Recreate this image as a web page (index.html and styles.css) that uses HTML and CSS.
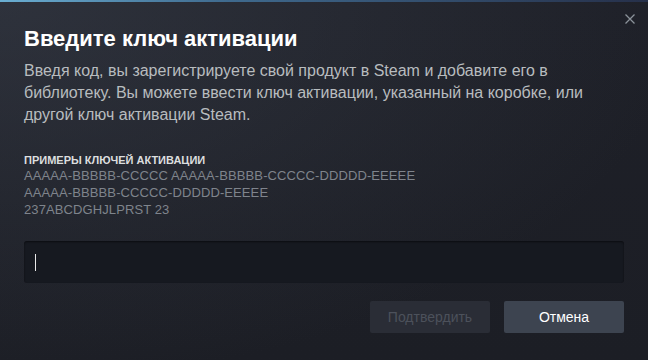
FILE: index.html
```html
<!DOCTYPE html>
<html>
<head>
  <meta charset="UTF-8">
  <title>Активация продукта</title>
  <link rel="stylesheet" href="styles.css">
</head>
<body>
  <div class="dialog">
    <button class="close-btn" aria-label="Закрыть">
      <svg width="10" height="10" viewBox="0 0 10 10">
        <path d="M0.5 0.5 L9.5 9.5 M9.5 0.5 L0.5 9.5" stroke="#8b929a" stroke-width="1.3" fill="none"/>
      </svg>
    </button>

    <h1 class="dialog-title">Введите ключ активации</h1>
    <p class="dialog-text">Введя код, вы зарегистрируете свой продукт в Steam и добавите его в библиотеку. Вы можете ввести ключ активации, указанный на коробке, или другой ключ активации Steam.</p>

    <div class="key-examples">
      <div class="key-label">Примеры ключей активации</div>
      <div class="key-line">AAAAA-BBBBB-CCCCC AAAAA-BBBBB-CCCCC-DDDDD-EEEEE</div>
      <div class="key-line">AAAAA-BBBBB-CCCCC-DDDDD-EEEEE</div>
      <div class="key-line">237ABCDGHJLPRST 23</div>
    </div>

    <div class="key-input"><span class="caret"></span></div>

    <div class="dialog-buttons">
      <button class="btn btn-disabled">Подтвердить</button>
      <button class="btn btn-cancel">Отмена</button>
    </div>
  </div>
</body>
</html>
```

FILE: styles.css
```css
:root {
  --text-main: #ffffff;
  --text-body: #b8bcbf;
  --text-keys: #7f848c;
  --input-bg: #161920;
  --btn-bg: #3d4450;
  --btn-disabled-bg: #2a2d36;
  --btn-disabled-text: #4c515b;
}

html, body {
  margin: 0;
  padding: 0;
}

body {
  font-family: "Liberation Sans", Arial, sans-serif;
  background: #1b1d23;
}

.dialog {
  position: relative;
  box-sizing: border-box;
  width: 648px;
  height: 360px;
  padding: 25px 24px 0;
  background:
    linear-gradient(to right, #6aaed2 0%, #3f6a8e 35%, #26304a 100%) top left / 100% 2px no-repeat,
    radial-gradient(ellipse at 0% 0%, rgba(62, 68, 80, 0.5) 0%, rgba(62, 68, 80, 0) 75%),
    linear-gradient(to bottom, #1e2028 0%, #1c1e25 100%);
}

.close-btn {
  position: absolute;
  top: 12px;
  right: 11px;
  width: 14px;
  height: 14px;
  padding: 2px;
  border: none;
  background: none;
  display: flex;
  align-items: center;
  justify-content: center;
}

.dialog-title {
  margin: 0;
  font-size: 22px;
  line-height: 28px;
  font-weight: bold;
  color: var(--text-main);
}

.dialog-text {
  margin: 7px 0 0;
  font-size: 16px;
  line-height: 22px;
  color: var(--text-body);
}

.key-examples {
  margin-top: 27px;
}

.key-label {
  font-size: 11px;
  line-height: 14px;
  font-weight: bold;
  text-transform: uppercase;
  color: #dcdedf;
}

.key-line {
  font-size: 13px;
  line-height: 17px;
  letter-spacing: 0.1px;
  color: var(--text-keys);
}

.key-input {
  margin-top: 23px;
  height: 42px;
  box-sizing: border-box;
  padding: 0 11px;
  border-radius: 3px;
  background: var(--input-bg);
  box-shadow: inset 0 1px 2px rgba(0, 0, 0, 0.5);
  display: flex;
  align-items: center;
}

.caret {
  width: 1px;
  height: 17px;
  background: #e8e8e8;
}

.dialog-buttons {
  margin-top: 18px;
  display: flex;
  justify-content: flex-end;
  gap: 14px;
}

.btn {
  width: 120px;
  height: 32px;
  border: none;
  border-radius: 2px;
  font-family: "Liberation Sans", Arial, sans-serif;
  font-size: 14px;
  padding: 0;
}

.btn-disabled {
  background: var(--btn-disabled-bg);
  color: var(--btn-disabled-text);
}

.btn-cancel {
  background: var(--btn-bg);
  color: #ffffff;
}
```
